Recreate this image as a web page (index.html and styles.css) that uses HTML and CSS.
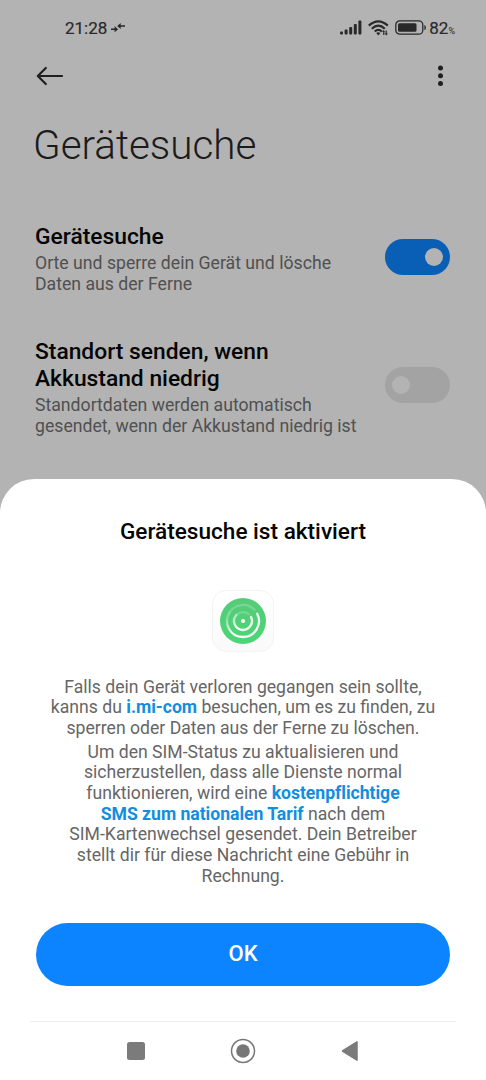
FILE: index.html
```html
<!DOCTYPE html>
<html lang="de">
<head>
<meta charset="utf-8">
<title>Gerätesuche</title>
<link rel="stylesheet" href="styles.css">
</head>
<body>
<div class="phone">
  <main class="settings">
    <div class="statusbar">
      <div class="clock"><span class="time">21:28</span>
        <svg width="16" height="10" viewBox="0 0 16 10" fill="none" stroke="#292929" stroke-width="1.400"><path d="M1 6.300h4.500M10 3h5"/><path d="M4.600 3.300 8.100 6.300 4.600 9.300zM10.700 0 7.200 3l3.500 3z" fill="#292929" stroke="none"/></svg>
      </div>
      <div class="indicators">
        <svg class="signal" width="22" height="15" viewBox="0 0 22 15" fill="#292929"><rect x="0" y="11.500" width="3" height="3" rx="1"/><rect x="4.600" y="9.500" width="3" height="5" rx="1"/><rect x="9.200" y="7" width="3" height="7.500" rx="1"/><rect x="13.800" y="4" width="3" height="10.500" rx="1"/><rect x="18.400" y=".5" width="3" height="14" rx="1"/></svg>
        <svg class="wifi" width="21" height="16" viewBox="0 0 21 16" fill="none" stroke="#292929" stroke-width="2.200"><path d="M.8 5.600Q5.500 1.300 10.300 1.300t9.500 4.300M3.800 8.700Q7 5.700 10.300 5.700t6.500 3M6.700 11.500q3.600-3.200 7.200 0"/><path d="M8.200 13.100q2.100-1.600 4.200 0l-2.100 2.400z" fill="#292929" stroke="none"/><path d="M15.800 15v-4M18.200 10.500v4" stroke-width="1.200"/><path d="m14 12 1.800-2 1 2zM17 13.500h3l-1.800 2z" fill="#292929" stroke="none"/></svg>
        <svg class="battery" width="31" height="15" viewBox="0 0 31 15"><rect x=".8" y=".8" width="27" height="13.400" rx="4" fill="none" stroke="#292929" stroke-width="1.300"/><rect x="3" y="3.200" width="18.500" height="8.600" rx="1.500" fill="#292929"/><path d="M29.400 5q1.500 0 1.500 2.500t-1.500 2.500z" fill="#292929"/></svg>
        <span class="percent">82<small>%</small></span>
      </div>
    </div>
    <div class="toolbar">
      <svg width="28" height="20" viewBox="0 0 28 20" fill="none" stroke="#1f1f1f" stroke-width="2.200" stroke-linecap="round" stroke-linejoin="round"><path d="M26 10H1.800M9.800 2 1.800 10l8 8"/></svg>
      <svg width="6" height="22" viewBox="0 0 6 22" fill="#1f1f1f"><circle cx="2.500" cy="3" r="2.500"/><circle cx="2.500" cy="10.800" r="2.500"/><circle cx="2.500" cy="18.600" r="2.500"/></svg>
    </div>
    <h1 class="page-title">Gerätesuche</h1>
    <section class="row">
      <div><h2 class="row-title">Gerätesuche</h2><p class="row-text">Orte und sperre dein Gerät und lösche<br>Daten aus der Ferne</p></div>
      <div class="toggle toggle-on"><span class="knob"></span></div>
    </section>
    <section class="row">
      <div><h2 class="row-title">Standort senden, wenn<br>Akkustand niedrig</h2><p class="row-text">Standortdaten werden automatisch<br>gesendet, wenn der Akkustand niedrig ist</p></div>
      <div class="toggle"><span class="knob"></span></div>
    </section>
  </main>
  <div class="sheet">
    <h2 class="sheet-title">Gerätesuche ist aktiviert</h2>
    <div class="app-icon">
      <svg width="46" height="46" viewBox="0 0 46 46" fill="none">
        <defs>
          <linearGradient id="disc" x1="0" y1="0" x2="0" y2="1"><stop offset="0" stop-color="#56cb79"/><stop offset="1" stop-color="#4bd675"/></linearGradient>
          <linearGradient id="ring" x1="0" y1="0" x2=".75" y2="1"><stop offset=".1" stop-color="#fff" stop-opacity=".25"/><stop offset=".75" stop-color="#fff"/></linearGradient>
        </defs>
        <circle cx="23" cy="23" r="23" fill="url(#disc)"/>
        <g stroke-width="2.300" stroke-linecap="round">
          <g stroke="#fff" opacity=".2"><path d="M9.500 14.400A16 16 0 0 1 34.500 11.800M17 16.300A9 9 0 0 1 28.500 16"/></g>
          <path d="M9.500 14.400A16 16 0 0 0 23 39M17 16.300A9 9 0 0 0 23 32" stroke="url(#ring)" stroke-linecap="butt"/>
          <path d="M23 39A16 16 0 0 0 37.200 15.700M23 32A9 9 0 0 0 31 19" stroke="#fff" stroke-opacity=".92"/>
        </g>
        <circle cx="23" cy="23" r="2.100" fill="#fff"/>
      </svg>
    </div>
    <p class="message">Falls dein Gerät verloren gegangen sein sollte,<br>kanns du <b class="link">i.mi-com</b> besuchen, um es zu finden, zu<br>sperren oder Daten aus der Ferne zu löschen.</p>
    <p class="message">Um den SIM-Status zu aktualisieren und<br>sicherzustellen, dass alle Dienste normal<br>funktionieren, wird eine <b class="link">kostenpflichtige<br>SMS zum nationalen Tarif</b> nach dem<br>SIM-Kartenwechsel gesendet. Dein Betreiber<br>stellt dir für diese Nachricht eine Gebühr in<br>Rechnung.</p>
    <button class="ok">OK</button>
    <nav class="navbar">
      <svg width="18" height="18" viewBox="0 0 18 18"><rect width="18" height="18" rx="2.500" fill="#7b7b7b"/></svg>
      <svg width="26" height="26" viewBox="0 0 26 26"><circle cx="13" cy="13" r="11.500" fill="none" stroke="#777" stroke-width="1.500"/><circle cx="13" cy="13" r="6.800" fill="#777"/></svg>
      <svg width="18" height="22" viewBox="0 0 18 22"><path d="M1.500 11 16 1.800v18.400z" fill="#7b7b7b" stroke="#7b7b7b" stroke-width="1.500" stroke-linejoin="round"/></svg>
    </nav>
  </div>
</div>
</body>
</html>
```
FILE: styles.css
```css
* { box-sizing: border-box; }
body, h1, h2, p { margin: 0; }
body { background: #b3b3b3; font-family: Roboto, sans-serif; }
.phone { width: 486px; height: 1080px; display: flex; flex-direction: column; overflow: hidden; background: #b3b3b3; }
.settings { height: 479px; flex: none; }
.statusbar { height: 55px; padding: 0 31px 0 65px; display: flex; justify-content: space-between; align-items: center; color: #292929; }
.clock, .indicators { display: flex; align-items: center; }
.time { font-size: 17px; font-weight: 400; -webkit-text-stroke: .2px #292929; margin-right: 3px; }
.wifi { margin-left: 6px; }
.battery { margin-left: 6px; }
.percent { margin-left: 3px; font-size: 17px; font-weight: 400; -webkit-text-stroke: .2px #292929; }
.percent small { font-size: 9px; -webkit-text-stroke: 0; }
.toolbar { height: 42px; padding: 0 42px 0 36px; display: flex; justify-content: space-between; align-items: center; }
.page-title { height: 126px; padding: 24px 0 0 33px; font-size: 40.4px; font-weight: 300; line-height: 50px; color: #1b1b1b; }
.row { display: flex; justify-content: space-between; align-items: center; padding: 0 36px 0 35px; margin-bottom: 43px; white-space: nowrap; }
.row-title { font-size: 22.8px; font-weight: 500; line-height: 27px; color: #050505; }
.row-text { margin-top: 3px; font-size: 17.66px; line-height: 21px; color: #505050; }
.toggle { width: 65px; height: 36px; flex: none; margin-bottom: 5px; padding: 0 7px; border-radius: 18px; background: #a3a3a3; display: flex; align-items: center; }
.toggle-on { justify-content: flex-end; background: #095eb5; }
.knob { width: 18px; height: 18px; border-radius: 50%; background: #b3b3b3; }
.sheet { height: 601px; flex: none; border-radius: 34px 34px 0 0; background: #fff; display: flex; flex-direction: column; align-items: center; padding-top: 39px; }
.sheet-title { font-size: 22.6px; font-weight: 500; line-height: 27px; color: #050505; }
.app-icon { width: 62px; height: 62px; margin: 44.500px 0 25px; border: 1px solid #f4f4f4; border-radius: 14px; background: linear-gradient(#fff, #fafafa); display: flex; align-items: center; justify-content: center; }
.message { margin-bottom: 3px; text-align: center; white-space: nowrap; font-size: 17.63px; line-height: 20.7px; color: #666; }
.link { color: #118ee0; font-weight: 700; letter-spacing: -.03px; }
.ok { width: 414px; height: 63px; margin-top: auto; padding: 0; border: 0; border-radius: 32px; background: #0d84ff; color: #fff; font: 500 22px/62px Roboto, sans-serif; }
.navbar { width: 426px; height: 59px; flex: none; margin-top: 35.500px; border-top: 1px solid #ededed; display: flex; justify-content: space-between; align-items: center; padding: 0 97px 0 97px; }
```
